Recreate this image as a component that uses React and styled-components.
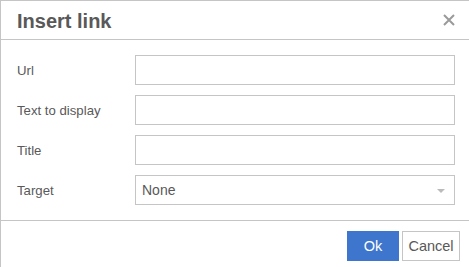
import React from "react";
import styled, { createGlobalStyle } from "styled-components";

const Global = createGlobalStyle`
  html, body { margin: 0; padding: 0; background: #fff; }
  body { font-family: "Liberation Sans", Arial, sans-serif; }
  * { box-sizing: border-box; }
`;

const Dialog = styled.div`
  width: 469px;
  height: 267px;
  border-left: 1px solid #c5c5c5;
  border-top: 1px solid #c5c5c5;
  background: #fff;
  display: flex;
  flex-direction: column;
  overflow: hidden;
`;

const Header = styled.div`
  height: 39px;
  border-bottom: 1px solid #c5c5c5;
  display: flex;
  align-items: center;
  justify-content: space-between;
  padding: 0 13px 0 16px;
  flex-shrink: 0;
`;

const Title = styled.h1`
  margin: 0;
  font-size: 20px;
  font-weight: bold;
  color: #595959;
  line-height: 1;
  padding-top: 1px;
`;

const Close = styled.button`
  border: 0;
  background: none;
  padding: 0;
  width: 14px;
  height: 14px;
  display: flex;
  align-items: center;
  justify-content: center;
  cursor: pointer;
`;

const Body = styled.div`
  height: 181px;
  border-bottom: 1px solid #c5c5c5;
  padding: 15px 14px 15px 16px;
  display: grid;
  grid-template-columns: 118px 320px;
  grid-auto-rows: 30px;
  row-gap: 10px;
  align-items: center;
  flex-shrink: 0;
`;

const Label = styled.label`
  font-size: 13.2px;
  color: #595959;
`;

const Input = styled.input`
  height: 30px;
  width: 320px;
  border: 1px solid #c5c5c5;
  padding: 0 6px;
  font-family: inherit;
  font-size: 14px;
  color: #595959;
  outline: none;
  background: #fff;
  border-radius: 0;
`;

const SelectBox = styled.div`
  position: relative;
  height: 30px;
  width: 320px;
  border: 1px solid #c5c5c5;
  padding: 0 6px;
  display: flex;
  align-items: center;
  font-size: 14px;
  color: #595959;
`;

const Caret = styled.span`
  position: absolute;
  right: 9px;
  top: 13px;
  width: 0;
  height: 0;
  border-left: 4px solid transparent;
  border-right: 4px solid transparent;
  border-top: 4px solid #bbb;
`;

const Footer = styled.div`
  display: flex;
  justify-content: flex-end;
  gap: 3px;
  padding: 10px 9px 0 0;
`;

const Button = styled.button`
  height: 30px;
  padding: 0;
  width: ${(p) => p.$w}px;
  font-family: inherit;
  font-size: 14.5px;
  border: 1px solid ${(p) => (p.$primary ? "#3d76cc" : "#c5c5c5")};
  background: ${(p) => (p.$primary ? "#3d76cc" : "#fff")};
  color: ${(p) => (p.$primary ? "#fff" : "#595959")};
  border-radius: 0;
  cursor: pointer;
`;

export default function App() {
  return (
    <>
      <Global />
      <Dialog>
        <Header>
          <Title>Insert link</Title>
          <Close aria-label="Close">
            <svg width="12" height="12" viewBox="0 0 12 12">
              <path d="M1 1L11 11M11 1L1 11" stroke="#9a9a9a" strokeWidth="2" />
            </svg>
          </Close>
        </Header>
        <Body>
          <Label>Url</Label>
          <Input />
          <Label>Text to display</Label>
          <Input />
          <Label>Title</Label>
          <Input />
          <Label>Target</Label>
          <SelectBox>
            None
            <Caret />
          </SelectBox>
        </Body>
        <Footer>
          <Button $primary $w={52}>Ok</Button>
          <Button $w={58}>Cancel</Button>
        </Footer>
      </Dialog>
    </>
  );
}
